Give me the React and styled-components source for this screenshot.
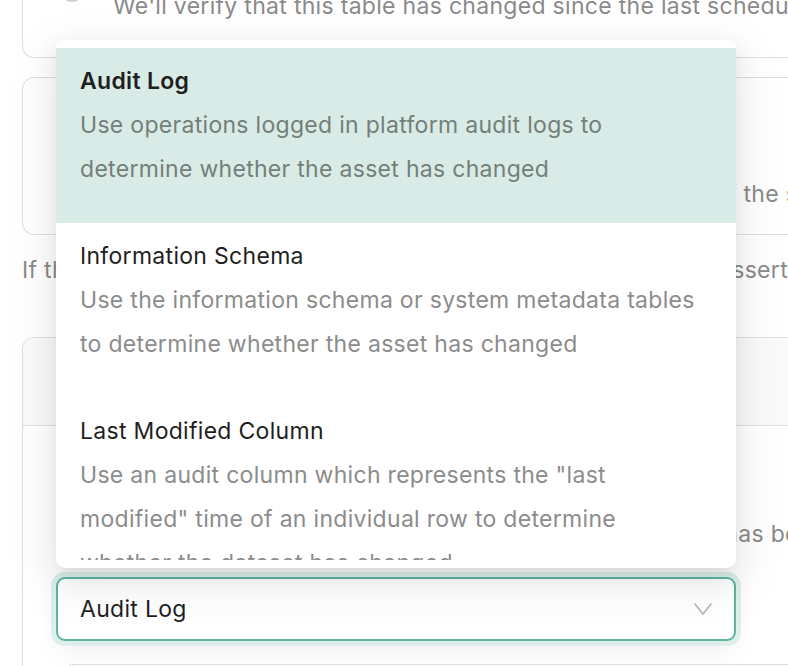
import React from "react";
import styled, { createGlobalStyle } from "styled-components";

const GlobalStyle = createGlobalStyle`
  html, body { margin: 0; padding: 0; background: #ffffff; }
  body {
    font-family: Inter, "Noto Sans", sans-serif;
    font-size: 23px;
    letter-spacing: 0.3px;
    -webkit-font-smoothing: antialiased;
  }
  * { box-sizing: border-box; }
`;

const Page = styled.div`
  position: relative;
  width: 788px;
  height: 666px;
  overflow: hidden;
  background: #fff;
`;

const Content = styled.div`
  width: 860px;
  margin-top: -89px;
  padding-left: 22px;
  display: flex;
  flex-direction: column;
`;

const OptionCard = styled.div`
  border: 1px solid #dedede;
  border-radius: 12px;
  display: flex;
  gap: 29px;
  padding: ${(p) => p.$pad};
  margin-top: ${(p) => p.$mt || 0}px;
  background: #fff;
`;

const Radio = styled.span`
  flex: 0 0 24px;
  width: 24px;
  height: 24px;
  border-radius: 50%;
  border: 2px solid #d0d0d0;
  margin-top: ${(p) => p.$mt}px;
`;

const CardText = styled.div`
  display: flex;
  flex-direction: column;
  min-width: 0;
`;

const CardTitle = styled.div`
  line-height: 44px;
  font-weight: 500;
  color: #222;
  white-space: nowrap;
`;

const CardDesc = styled.div`
  line-height: 44px;
  color: #8a8a8a;
  white-space: nowrap;
`;

const Paragraph = styled.p`
  margin: 13px 0 0;
  line-height: 44px;
  color: #8a8a8a;
  white-space: nowrap;
`;

const Section = styled.div`
  margin-top: 45px;
  border: 1px solid #dedede;
  border-radius: 12px 12px 0 0;
  border-bottom: none;
  display: flex;
  flex-direction: column;
`;

const SectionHeader = styled.div`
  height: 88px;
  background: #fafafa;
  border-bottom: 1px solid #e3e3e3;
  border-radius: 12px 12px 0 0;
  display: flex;
  align-items: center;
  padding: 0 33px;
  font-weight: 600;
  color: #222;
`;

const SectionBody = styled.div`
  padding: 42px 0 0 33px;
  display: flex;
  flex-direction: column;
`;

const FieldLabel = styled.div`
  line-height: 44px;
  font-weight: 500;
  color: #222;
  white-space: nowrap;
`;

const FieldHelp = styled.div`
  line-height: 44px;
  color: #8a8a8a;
  white-space: nowrap;
`;

const SelectBox = styled.div`
  margin-top: 21px;
  width: 680px;
  height: 64px;
  border: 2px solid #5cb4a1;
  border-radius: 9px;
  box-shadow: 0 0 0 5px #dcefea, 0 10px 26px rgba(0, 0, 0, 0.06);
  background: #fff;
  display: flex;
  align-items: center;
  justify-content: space-between;
  padding: 0 22px 0 22px;
`;

const SelectValue = styled.span`
  color: #1f1f1f;
`;

const NextField = styled.div`
  margin: 23px 0 0 10px;
  height: 40px;
  border-top: 1px solid #dcdcdc;
  border-left: 1px solid #dcdcdc;
  border-radius: 8px 0 0 0;
`;

const Dropdown = styled.div`
  position: absolute;
  left: 56px;
  top: 40px;
  width: 680px;
  height: 528px;
  background: #fff;
  border-radius: 9px;
  padding: 8px 0;
  box-shadow: 0 10px 26px 0 rgba(0, 0, 0, 0.08),
    0 5px 10px -6px rgba(0, 0, 0, 0.12),
    0 14px 45px 13px rgba(0, 0, 0, 0.05);
`;

const OptionList = styled.div`
  height: 512px;
  overflow: hidden;
  display: flex;
  flex-direction: column;
`;

const Option = styled.div`
  flex: 0 0 175px;
  padding: 11px 24px 32px;
  background: ${(p) => (p.$active ? "#d9ebe6" : "#fff")};
`;

const OptionTitle = styled.div`
  line-height: 44px;
  font-weight: ${(p) => (p.$active ? 600 : 400)};
  color: #1f1f1f;
`;

const OptionDesc = styled.div`
  line-height: 44px;
  color: ${(p) => (p.$active ? "#737f79" : "#8c8c8c")};
`;

const options = [
  {
    title: "Audit Log",
    desc: "Use operations logged in platform audit logs to determine whether the asset has changed",
  },
  {
    title: "Information Schema",
    desc: "Use the information schema or system metadata tables to determine whether the asset has changed",
  },
  {
    title: "Last Modified Column",
    desc: 'Use an audit column which represents the "last modified" time of an individual row to determine whether the dataset has changed',
  },
];

const Chevron = () => (
  <svg width="18" height="12" viewBox="0 0 18 12" fill="none">
    <polyline points="1,1 9,11 17,1" stroke="#b5b5b5" strokeWidth="1.6" strokeLinecap="round" strokeLinejoin="round" />
  </svg>
);

export default function App() {
  return (
    <>
      <GlobalStyle />
      <Page>
        <Content>
          <OptionCard $pad="28px 22px 29px 37px">
            <Radio $mt={38} />
            <CardText>
              <CardTitle>Scheduled Interval</CardTitle>
              <CardDesc>We'll verify that this table has changed since the last scheduled check</CardDesc>
            </CardText>
          </OptionCard>
          <OptionCard $mt={19} $pad="50px 22px 18px 37px">
            <Radio $mt={11} />
            <CardText>
              <CardTitle>Since the previous check</CardTitle>
              <CardDesc>We'll verify that the table has changed since the start of the schedule window</CardDesc>
            </CardText>
          </OptionCard>
          <Paragraph>If this table has not changed in the expected time window, the assertion will fail</Paragraph>
          <Section>
            <SectionHeader>Advanced</SectionHeader>
            <SectionBody>
              <FieldLabel>Change Source</FieldLabel>
              <FieldHelp>Select the mechanism used to determine whether this table has been updated</FieldHelp>
              <SelectBox>
                <SelectValue>Audit Log</SelectValue>
                <Chevron />
              </SelectBox>
              <NextField />
            </SectionBody>
          </Section>
        </Content>
        <Dropdown>
          <OptionList>
            {options.map((o, i) => (
              <Option key={o.title} $active={i === 0}>
                <OptionTitle $active={i === 0}>{o.title}</OptionTitle>
                <OptionDesc $active={i === 0}>{o.desc}</OptionDesc>
              </Option>
            ))}
          </OptionList>
        </Dropdown>
      </Page>
    </>
  );
}
